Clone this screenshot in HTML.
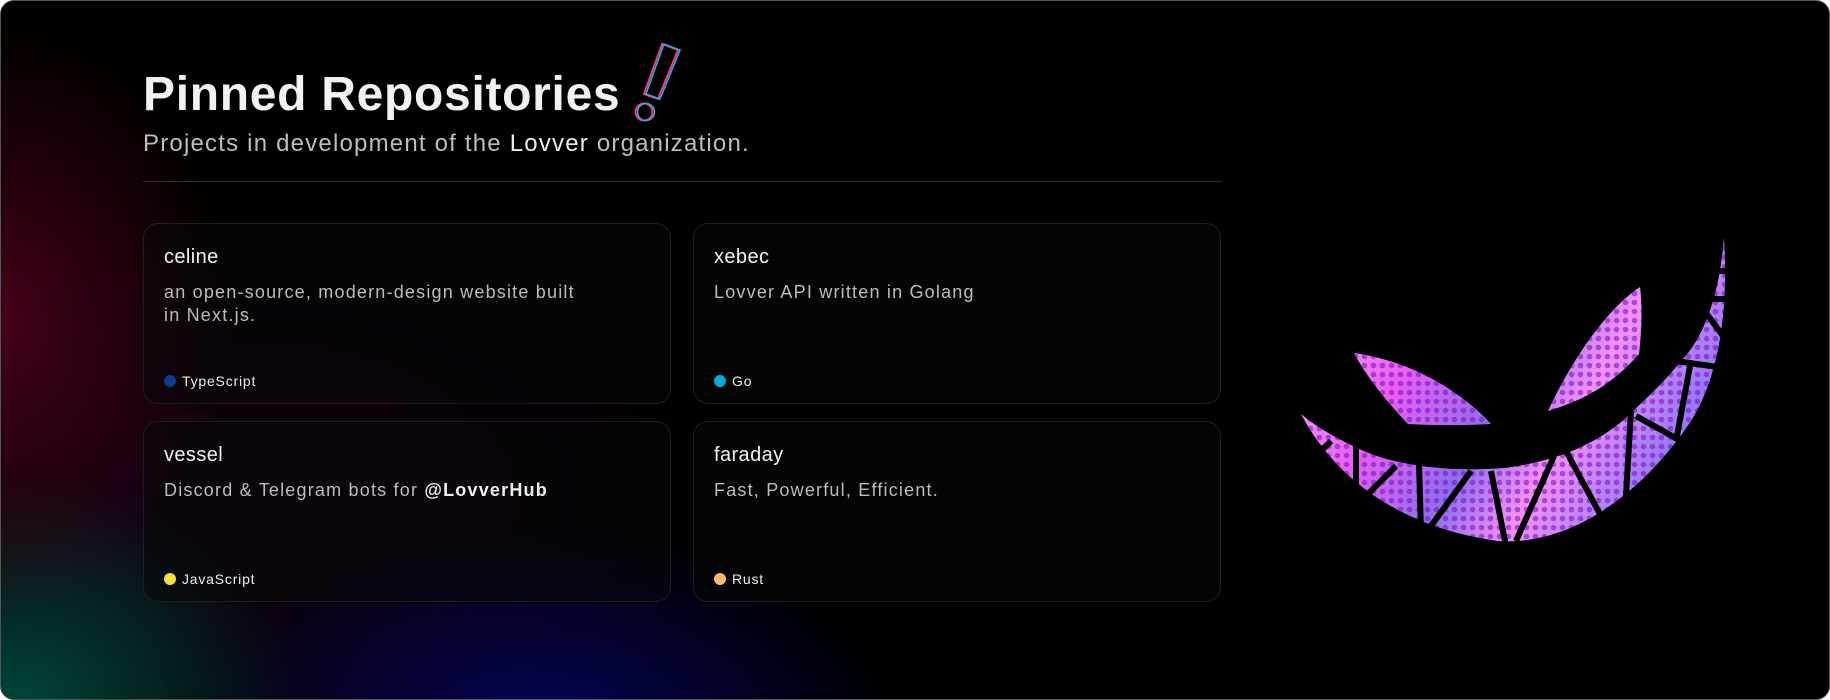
<!DOCTYPE html>
<html><head><meta charset="utf-8">
<style>
html,body{margin:0;padding:0;background:#fff;}
body{width:1830px;height:700px;overflow:hidden;font-family:"Liberation Sans",sans-serif;}
.frame{position:absolute;left:0;top:0;width:1828px;height:698px;border:1px solid #555;border-radius:14px;overflow:hidden;
background:
radial-gradient(ellipse 230px 300px at 0px 320px, rgba(75,0,28,0.9), rgba(0,0,0,0) 100%),
radial-gradient(ellipse 280px 230px at 20px 700px, rgba(0,80,65,0.85), rgba(0,0,0,0) 100%),
radial-gradient(ellipse 360px 200px at 540px 730px, rgba(5,5,100,0.9), rgba(0,0,0,0) 100%),
radial-gradient(ellipse 500px 300px at 250px 500px, rgba(30,0,30,0.6), rgba(0,0,0,0) 100%),
#000;}
.title{position:absolute;left:142px;top:70px;font-size:48px;font-weight:bold;color:#f2f2f2;letter-spacing:0.7px;line-height:1;}
.sub{position:absolute;left:142px;top:131px;font-size:24px;color:#bdbdbd;line-height:1;letter-spacing:1.2px;}
.sub b{color:#eee;font-weight:normal;}
.hr{position:absolute;left:142px;top:180px;width:1079px;height:1px;background:#2c2c2c;}
.card{position:absolute;width:528px;height:181px;border:1px solid #1f1f1f;border-radius:15px;background:rgba(8,8,10,0.55);box-sizing:border-box;}
.card .t{position:absolute;left:20px;top:22px;font-size:20px;color:#f2f2f2;letter-spacing:0.4px;}
.card .d{position:absolute;left:20px;top:57px;font-size:18px;color:#bcbcbc;line-height:23px;letter-spacing:1.2px;}
.card .d b{color:#f0f0f0;font-weight:bold;}
.card .l{position:absolute;left:20px;top:149px;font-size:14px;color:#eee;line-height:16px;letter-spacing:0.8px;}
.card .l i{display:inline-block;width:12px;height:12px;border-radius:50%;vertical-align:-1px;margin-right:6px;}
</style></head><body>
<div class="frame">
<div class="title">Pinned Repositories</div>
<svg style="position:absolute;left:620px;top:35px" width="80" height="100" viewBox="620 35 80 100">
<polygon points="661,43 677,49 657,98 643,93" fill="none" stroke="#ff2f8e" stroke-width="2"/>
<circle cx="643" cy="111" r="8.5" fill="none" stroke="#ff2f8e" stroke-width="2"/>
<polygon points="663,43 679,49 659,98 645,93" fill="none" stroke="#1fb6d2" stroke-width="1.5"/>
<circle cx="645" cy="111" r="8.5" fill="none" stroke="#1fb6d2" stroke-width="1.5"/>
</svg>
<div class="sub">Projects in development of the <b>Lovver</b> organization.</div>
<div class="hr"></div>

<div class="card" style="left:142px;top:222px">
<div class="t">celine</div>
<div class="d">an open-source, modern-design website built<br>in Next.js.</div>
<div class="l"><i style="background:#0c3c8c"></i>TypeScript</div>
</div>
<div class="card" style="left:692px;top:222px">
<div class="t">xebec</div>
<div class="d">Lovver API written in Golang</div>
<div class="l"><i style="background:#00acd7"></i>Go</div>
</div>
<div class="card" style="left:142px;top:420px">
<div class="t">vessel</div>
<div class="d">Discord &amp; Telegram bots for <b>@LovverHub</b></div>
<div class="l"><i style="background:#f7e03c"></i>JavaScript</div>
</div>
<div class="card" style="left:692px;top:420px">
<div class="t">faraday</div>
<div class="d">Fast, Powerful, Efficient.</div>
<div class="l"><i style="background:#ffb86b"></i>Rust</div>
</div>

<svg style="position:absolute;left:0;top:0" width="1830" height="700" viewBox="0 0 1830 700">
<defs>
<linearGradient id="g" x1="1300" y1="300" x2="1730" y2="540" gradientUnits="userSpaceOnUse">
<stop offset="0" stop-color="#f8a0f4"/>
<stop offset="0.25" stop-color="#e028e8"/>
<stop offset="0.45" stop-color="#5a40e0"/>
<stop offset="0.6" stop-color="#f070f0"/>
<stop offset="0.8" stop-color="#6a50f0"/>
<stop offset="1" stop-color="#c050e8"/>
</linearGradient>
<pattern id="dots" width="9" height="9" patternUnits="userSpaceOnUse">
<rect width="9" height="9" fill="#ffe0ff" opacity="0.3"/>
<circle cx="4.5" cy="4.5" r="2.8" fill="#8010d0" opacity="0.6"/>
</pattern>
</defs>
<g>
<path id="eyeL" d="M1353,352 C1410,360 1460,390 1490,423 C1455,425 1425,424 1407,423 C1385,400 1365,375 1353,352 Z"/>
<path id="eyeR" d="M1547,410 C1575,350 1610,305 1639,286 C1642,310 1640,335 1638,353 C1610,385 1580,400 1547,410 Z"/>
<path id="mouth" d="M1300,413 C1330,470 1390,525 1497,540 C1580,545 1650,480 1690,420 C1715,380 1728,320 1723,237 C1718,300 1700,340 1680,360 C1660,385 1640,402 1627,415 C1600,440 1560,460 1503,467 C1440,472 1390,462 1363,450 C1340,440 1318,428 1300,413 Z"/>
</g>
<use href="#eyeL" fill="url(#g)"/><use href="#eyeL" fill="url(#dots)"/>
<use href="#eyeR" fill="url(#g)"/><use href="#eyeR" fill="url(#dots)"/>
<use href="#mouth" fill="url(#g)"/><use href="#mouth" fill="url(#dots)"/>
<g stroke="#000" stroke-width="6" fill="none">
<line x1="1330" y1="440" x2="1318" y2="452"/>
<line x1="1355" y1="445" x2="1355" y2="490"/>
<line x1="1395" y1="465" x2="1365" y2="495"/>
<line x1="1418" y1="462" x2="1420" y2="530"/>
<line x1="1470" y1="470" x2="1430" y2="525"/>
<line x1="1490" y1="470" x2="1505" y2="545"/>
<line x1="1553" y1="455" x2="1515" y2="540"/>
<line x1="1565" y1="450" x2="1600" y2="515"/>
<line x1="1630" y1="410" x2="1625" y2="495"/>
<line x1="1635" y1="415" x2="1680" y2="440"/>
<line x1="1690" y1="360" x2="1675" y2="440"/>
<line x1="1675" y1="360" x2="1730" y2="368"/>
<line x1="1700" y1="305" x2="1722" y2="335"/>
<line x1="1705" y1="298" x2="1730" y2="298"/>
<line x1="1710" y1="270" x2="1730" y2="270"/>
</g>
</svg>
</div>
</body></html>
